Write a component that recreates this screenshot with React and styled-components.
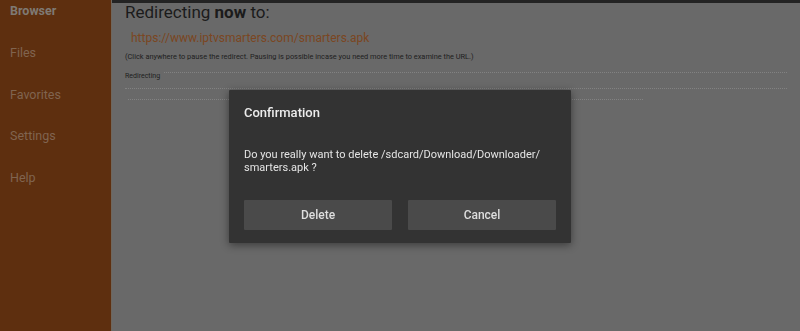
import styled, { createGlobalStyle } from "styled-components";

const Global = createGlobalStyle`
  html, body {
    margin: 0;
    padding: 0;
    background: #696969;
    font-family: Roboto, "Liberation Sans", sans-serif;
  }
`;

const Screen = styled.div`
  display: flex;
  width: 800px;
  height: 331px;
  overflow: hidden;
`;

const Sidebar = styled.nav`
  width: 111px;
  flex-shrink: 0;
  background: #5e2f0f;
  border-right: 1px solid #6f665c;
  display: flex;
  flex-direction: column;
`;

const NavItem = styled.div`
  height: 41.75px;
  padding: 3px 0 0 10px;
  box-sizing: border-box;
  font-size: 12.5px;
  line-height: 16px;
  font-weight: ${(p) => (p.$active ? 700 : 400)};
  color: ${(p) => (p.$active ? "#7f7a74" : "#80644f")};
`;

const Main = styled.main`
  flex: 1;
  background: #696969;
  border-top: 3px solid #232323;
  padding: 0 13px;
  display: flex;
  flex-direction: column;
  align-items: flex-start;
`;

const Heading = styled.h1`
  margin: 0;
  font-size: 17px;
  font-weight: 400;
  line-height: 18px;
  color: #1b1b1b;
  b {
    font-weight: 700;
  }
`;

const Url = styled.div`
  margin: 10px 0 0 6px;
  font-size: 12px;
  line-height: 14px;
  color: #7b4621;
`;

const Hint = styled.div`
  margin-top: 7px;
  font-size: 7.4px;
  line-height: 10px;
  color: #1e1e1e;
`;

const ProgressRow = styled.div`
  align-self: stretch;
  margin-top: 10px;
  display: flex;
  align-items: flex-end;
  gap: 4px;
  font-size: 7px;
  line-height: 9px;
  color: #1e1e1e;
`;

const Dots = styled.div`
  height: 0;
  border-bottom: 1px dotted #828282;
  margin: ${(p) => p.$top || 0}px 0 2px ${(p) => p.$indent || 0}px;
  width: ${(p) => (p.$width ? `${p.$width}px` : "auto")};
  flex: ${(p) => (p.$fill ? 1 : "none")};
  align-self: ${(p) => (p.$width ? "flex-start" : "stretch")};
`;

const Overlay = styled.div`
  position: fixed;
  inset: 0;
  display: flex;
  align-items: center;
  justify-content: center;
  padding-top: 2px;
`;

const Dialog = styled.div`
  width: 342px;
  box-sizing: border-box;
  padding: 15px 15px 13px;
  background: #333333;
  box-shadow: 0 2px 8px rgba(0, 0, 0, 0.45);
  border-radius: 1px;
`;

const Title = styled.div`
  font-size: 13px;
  font-weight: 500;
  line-height: 15px;
  color: #ececec;
`;

const Message = styled.div`
  margin-top: 28px;
  font-size: 11px;
  line-height: 13px;
  color: #e4e4e4;
`;

const Actions = styled.div`
  margin-top: 26px;
  display: grid;
  grid-template-columns: 1fr 1fr;
  gap: 16px;
`;

const Button = styled.button`
  height: 30px;
  border: none;
  border-radius: 1px;
  background: #4a4a4a;
  color: #dedede;
  font-family: inherit;
  font-size: 12px;
  font-weight: 500;
`;

const navItems = ["Browser", "Files", "Favorites", "Settings", "Help"];

export default function App() {
  return (
    <>
      <Global />
      <Screen>
        <Sidebar>
          {navItems.map((item, i) => (
            <NavItem key={item} $active={i === 0}>
              {item}
            </NavItem>
          ))}
        </Sidebar>
        <Main>
          <Heading>
            Redirecting <b>now</b> to:
          </Heading>
          <Url>https://www.iptvsmarters.com/smarters.apk</Url>
          <Hint>
            (Click anywhere to pause the redirect. Pausing is possible incase you
            need more time to examine the URL.)
          </Hint>
          <ProgressRow>
            Redirecting
            <Dots $fill />
          </ProgressRow>
          <Dots $top={7} />
          <Dots $top={8} $indent={3} $width={515} />
        </Main>
      </Screen>
      <Overlay>
        <Dialog>
          <Title>Confirmation</Title>
          <Message>
            Do you really want to delete /sdcard/Download/Downloader/
            <br />
            smarters.apk ?
          </Message>
          <Actions>
            <Button>Delete</Button>
            <Button>Cancel</Button>
          </Actions>
        </Dialog>
      </Overlay>
    </>
  );
}
